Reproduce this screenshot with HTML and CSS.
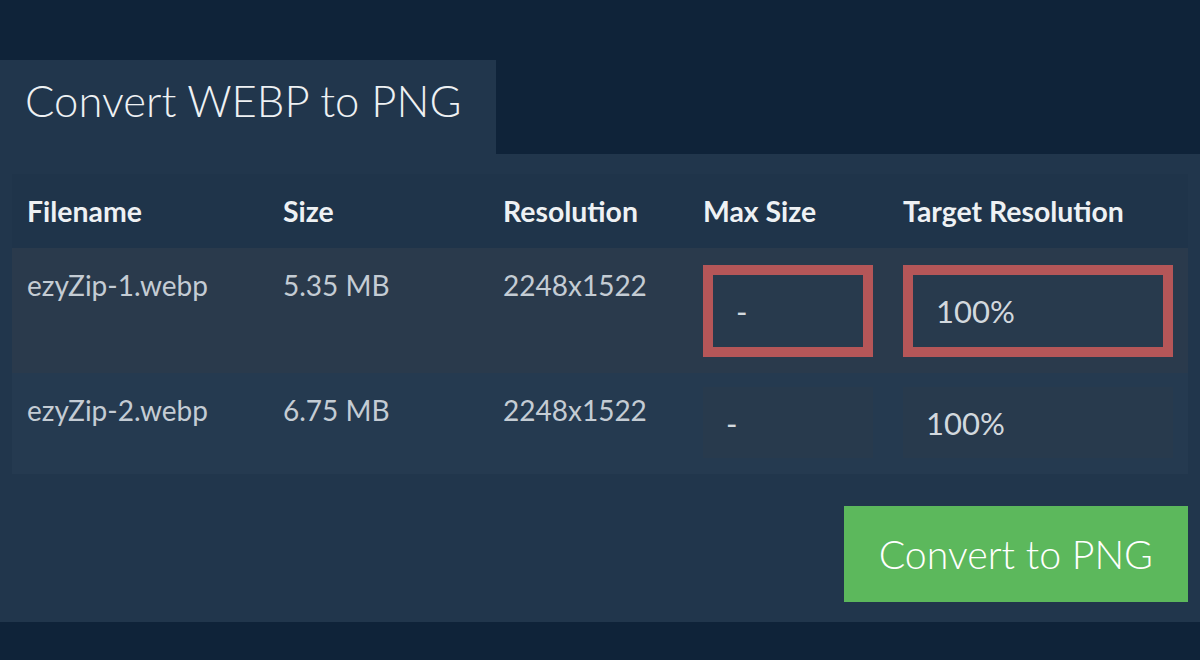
FILE: index.html
```html
<!DOCTYPE html>
<html lang="en">
<head>
<meta charset="utf-8">
<title>Convert WEBP to PNG</title>
<link rel="stylesheet" href="styles.css">
</head>
<body>
<div class="page">
  <div class="tab"><h1 class="title">Convert WEBP to PNG</h1></div>
  <div class="panel">
    <table class="files">
      <colgroup>
        <col class="c-name"><col class="c-size"><col class="c-res"><col class="c-max"><col class="c-target">
      </colgroup>
      <thead>
        <tr>
          <th>Filename</th><th>Size</th><th>Resolution</th><th>Max Size</th><th>Target Resolution</th>
        </tr>
      </thead>
      <tbody>
        <tr class="row-active">
          <td>ezyZip-1.webp</td><td>5.35 MB</td><td>2248x1522</td>
          <td class="field"><input class="box box-hl" type="text" value="-" readonly></td>
          <td class="field"><input class="box box-hl" type="text" value="100%" readonly></td>
        </tr>
        <tr class="row-plain">
          <td>ezyZip-2.webp</td><td>6.75 MB</td><td>2248x1522</td>
          <td class="field"><input class="box" type="text" value="-" readonly></td>
          <td class="field"><input class="box" type="text" value="100%" readonly></td>
        </tr>
      </tbody>
    </table>
    <div class="actions">
      <button class="convert" type="button">Convert to PNG</button>
    </div>
  </div>
</div>
</body>
</html>
```

FILE: styles.css
```css
html, body {
  margin: 0;
  padding: 0;
  background: #0f2339;
}

body {
  width: 1200px;
  height: 660px;
  overflow: hidden;
  font-family: Lato, "Open Sans", sans-serif;
}

.page {
  padding-top: 60px;
}

.tab {
  width: 496px;
  height: 94px;
  box-sizing: border-box;
  background: #21364c;
  padding: 14px 0 0 25px;
}

.title {
  margin: 0;
  font-size: 43.6px;
  font-weight: 300;
  color: #eef1f3;
  line-height: normal;
}

.panel {
  background: #21364c;
  padding: 20px 12px 20px 12px;
}

.files {
  width: 100%;
  border-collapse: collapse;
  table-layout: fixed;
}

.c-name { width: 256px; }
.c-size { width: 220px; }
.c-res { width: 200px; }
.c-max { width: 200px; }
.c-target { width: 300px; }

.files thead tr {
  background: #1f344a;
}

.files th {
  text-align: left;
  font-size: 28.4px;
  font-weight: 700;
  color: #eef1f4;
  padding: 20px 15px 20px 15px;
  line-height: normal;
}

.files td {
  vertical-align: top;
  font-size: 28px;
  font-weight: 400;
  color: #c4ccd4;
  padding: 20px 15px 16px 15px;
  line-height: normal;
}

.row-active { background: #2a3a4c; }
.row-plain { background: #253a50; }

.files td.field {
  padding: 17px 15px 16px 15px;
}

.row-plain td.field {
  padding: 14px 15px 16px 15px;
}

.box {
  display: block;
  width: 100%;
  box-sizing: border-box;
  margin: 0;
  border: 0;
  outline: none;
  background: #283a4d;
  color: #d2d8de;
  font-family: Lato, "Open Sans", sans-serif;
  font-size: 31px;
  font-weight: 400;
  line-height: 38px;
  height: 71px;
  padding: 0 23px;
}

.box-hl {
  border: 10px solid #b55658;
  height: 92px;
}

.actions {
  display: flex;
  justify-content: flex-end;
  margin-top: 32px;
}

.convert {
  height: 96px;
  padding: 0 35px;
  border: 0;
  margin: 0;
  background: #5cb85c;
  color: #ffffff;
  font-family: Lato, "Open Sans", sans-serif;
  font-size: 39.3px;
  font-weight: 300;
  line-height: 96px;
  cursor: pointer;
}
```
